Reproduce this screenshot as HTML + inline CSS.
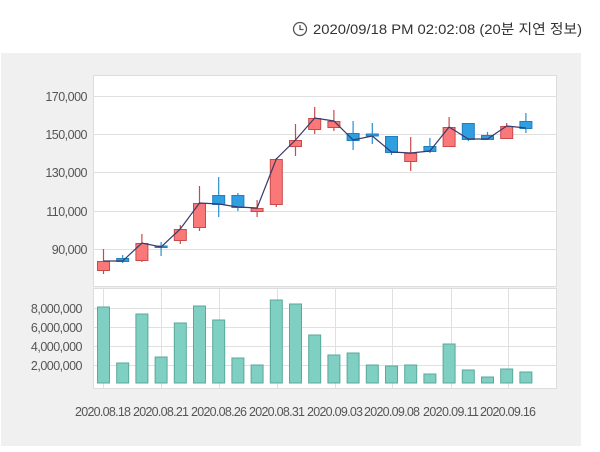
<!DOCTYPE html>
<html><head><meta charset="utf-8"><style>
body{margin:0;width:600px;height:447px;background:#fff;overflow:hidden;font-family:"Liberation Sans","Noto Sans CJK KR",sans-serif}
</style></head><body>
<svg width="600" height="447" xmlns="http://www.w3.org/2000/svg" font-family="Liberation Sans, Noto Sans CJK KR, sans-serif">
<circle cx="300" cy="29" r="6.5" fill="none" stroke="#555" stroke-width="1.3"/>
<path d="M300 25V29.5H303.5" fill="none" stroke="#555" stroke-width="1.3"/>
<text x="313" y="34" font-size="14" fill="#333" textLength="269" lengthAdjust="spacingAndGlyphs">2020/09/18 PM 02:02:08 (20분 지연 정보)</text>
<rect x="1" y="53" width="580" height="393" fill="#f0f0f0"/>
<rect x="93.5" y="75.5" width="463" height="211" fill="#fff" stroke="#ddd"/>
<rect x="93.5" y="288.5" width="463" height="100" fill="#fff" stroke="#ddd"/>
<g stroke="#e0e0e0" stroke-width="1">
<path d="M94 96.5H556M94 134.5H556M94 172.5H556M94 211.5H556M94 249.5H556"/>
<path d="M94 308.5H556M94 327.5H556M94 346.5H556M94 365.5H556"/>
<path d="M103.5 289V388M161.5 289V388M219.5 289V388M277.5 289V388M335.5 289V388M392.5 289V388M451.5 289V388M508.5 289V388"/>
</g>
<g font-size="12.5" fill="#555" text-anchor="end" letter-spacing="-0.5">
<text x="87" y="101">170,000</text><text x="87" y="139">150,000</text><text x="87" y="177">130,000</text><text x="87" y="216">110,000</text><text x="87" y="254">90,000</text>
<text x="82" y="313">8,000,000</text><text x="82" y="332">6,000,000</text><text x="82" y="351">4,000,000</text><text x="82" y="370">2,000,000</text>
</g>
<g font-size="12.5" fill="#555" text-anchor="middle" lengthAdjust="spacingAndGlyphs">
<text x="103" y="416" textLength="56">2020.08.18</text><text x="161" y="416" textLength="56">2020.08.21</text><text x="219" y="416" textLength="56">2020.08.26</text><text x="277" y="416" textLength="56">2020.08.31</text><text x="335" y="416" textLength="56">2020.09.03</text><text x="392" y="416" textLength="56">2020.09.08</text><text x="451" y="416" textLength="56">2020.09.11</text><text x="508" y="416" textLength="56">2020.09.16</text>
</g>
<g fill="#7fcfc2" stroke="#5aa99b">
<rect x="97.5" y="307" width="12" height="76"/><rect x="116.7" y="363" width="12" height="20"/><rect x="135.9" y="314" width="12" height="69"/><rect x="155.1" y="357" width="12" height="26"/><rect x="174.3" y="323" width="12" height="60"/><rect x="193.5" y="306" width="12" height="77"/><rect x="212.7" y="320" width="12" height="63"/><rect x="231.9" y="358" width="12" height="25"/><rect x="251.1" y="365" width="12" height="18"/><rect x="270.3" y="300" width="12" height="83"/><rect x="289.5" y="304" width="12" height="79"/><rect x="308.7" y="335" width="12" height="48"/><rect x="327.9" y="355" width="12" height="28"/><rect x="347.1" y="353" width="12" height="30"/><rect x="366.3" y="365" width="12" height="18"/><rect x="385.5" y="366" width="12" height="17"/><rect x="404.7" y="365" width="12" height="18"/><rect x="423.9" y="374" width="12" height="9"/><rect x="443.1" y="344" width="12" height="39"/><rect x="462.3" y="370" width="12" height="13"/><rect x="481.5" y="377" width="12" height="6"/><rect x="500.7" y="369" width="12" height="14"/><rect x="519.9" y="372" width="12" height="11"/>
</g>
<g stroke="#c94a4a" stroke-width="1.2">
<path d="M103.5 249V274M141.9 234V262M180.3 225V244M199.5 186V231M257.1 200V217M276.3 158V207M295.5 124V156M314.7 107V134M333.9 110V131M410.7 137V171M449.1 117V147M506.7 123V139"/>
</g>
<g stroke="#2a8fd0" stroke-width="1.2">
<path d="M122.7 255V263M161.1 242V256M218.7 177V217M237.9 193V211M353.1 121V150M372.3 123V144M391.5 136V155M429.9 138V153M468.3 123V141M487.5 132V139M525.9 113V133"/>
</g>
<g fill="#fa7878" stroke="#c94a4a">
<rect x="97.5" y="261.5" width="12" height="9"/><rect x="135.9" y="243.5" width="12" height="17"/><rect x="174.3" y="229.5" width="12" height="11"/><rect x="193.5" y="203.5" width="12" height="24"/><rect x="251.1" y="208.5" width="12" height="3"/><rect x="270.3" y="159.5" width="12" height="45"/><rect x="289.5" y="140.5" width="12" height="6"/><rect x="308.7" y="118.5" width="12" height="11"/><rect x="327.9" y="121.5" width="12" height="6"/><rect x="404.7" y="153.5" width="12" height="8"/><rect x="443.1" y="127.5" width="12" height="19"/><rect x="500.7" y="126.5" width="12" height="12"/>
</g>
<g fill="#2f9fe2" stroke="#1f7fc0">
<rect x="116.7" y="258.5" width="12" height="3"/><rect x="155.1" y="246" width="12" height="1.5"/><rect x="212.7" y="195.5" width="12" height="9"/><rect x="231.9" y="195.5" width="12" height="12"/><rect x="347.1" y="133.5" width="12" height="7"/><rect x="366.3" y="134" width="12" height="2"/><rect x="385.5" y="136.5" width="12" height="16"/><rect x="423.9" y="146.5" width="12" height="5"/><rect x="462.3" y="123.5" width="12" height="16"/><rect x="481.5" y="135.5" width="12" height="4"/><rect x="519.9" y="121.5" width="12" height="7"/>
</g>
<polyline fill="none" stroke="#3a3a6a" stroke-width="1.2" points="103.5,261 122.7,261 141.9,243 161.1,247 180.3,229 199.5,203 218.7,204 237.9,207 257.1,208 276.3,159 295.5,140 314.7,118 333.9,121 353.1,140 372.3,136 391.5,152 410.7,153 429.9,151 449.1,127 468.3,139 487.5,139 506.7,126 525.9,128"/>
</svg>
</body></html>
